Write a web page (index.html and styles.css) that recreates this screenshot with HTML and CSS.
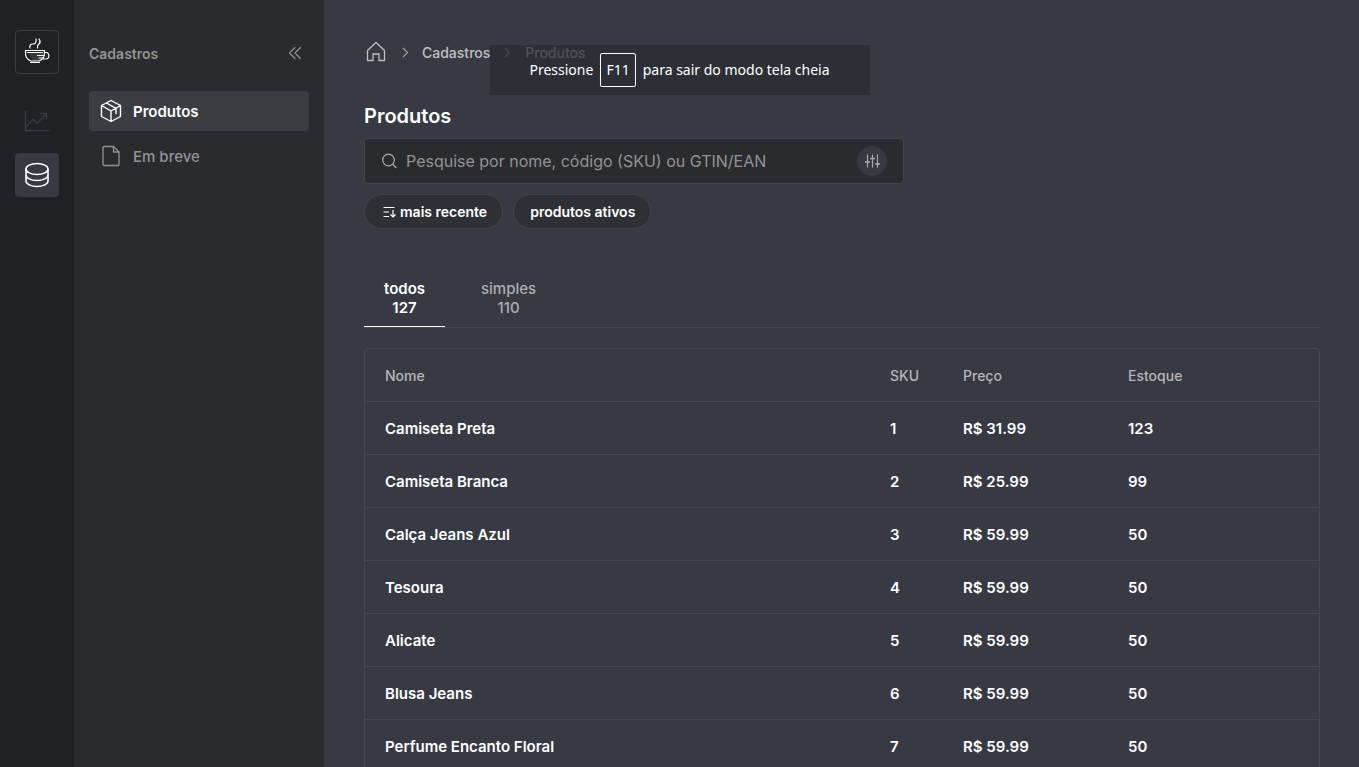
FILE: index.html
```html
<!DOCTYPE html>
<html lang="pt-BR">
<head>
<meta charset="utf-8">
<meta name="viewport" content="width=device-width, initial-scale=1">
<title>Produtos</title>
<link rel="stylesheet" href="styles.css">
</head>
<body>
<div class="app">
  <nav class="rail" aria-label="Principal">
    <a class="rail-item logo" href="#" aria-label="Início">
      <svg width="28" height="28" viewBox="0 0 28 28" fill="none" stroke="#fff" stroke-width="1.200" stroke-linecap="round" stroke-linejoin="round">
        <path d="M6.500 15c0 4 2 6.500 5 8.500h5l3-4V15z" fill="#373a42" stroke="none"/>
        <path d="M2.500 12.500h19M2.500 12.500V15c0 4 2.500 7 5.500 8h8c3-1 5.500-4 5.500-8v-2.500M4.500 14.500h15M7.500 24.500h9"/>
        <path d="M14.500 17.500h6M16 20h4M21.500 14.500H23c4 0 4 6.500-.5 6.500H20"/>
        <path d="M7 10c-.5-3 .5-4 3-4s3.500-1.500 3-5M14.500 10c-.5-3 .5-3 2-4.500s.5-3-.5-4.500"/>
      </svg>
    </a>
    <a class="rail-item chart" href="#" aria-label="Relatórios">
      <svg width="28" height="28" viewBox="0 0 28 28" fill="none" stroke="currentColor" stroke-width="1.500" stroke-linecap="round" stroke-linejoin="round">
        <path d="M2.500 4.500v19h23M3 20l7-7.500 4 4L23 7M18 6.500h5.500V12"/>
      </svg>
    </a>
    <a class="rail-item current" href="#" aria-label="Cadastros">
      <svg width="28" height="28" viewBox="0 0 28 28" fill="none" stroke="currentColor" stroke-width="1.600">
        <ellipse cx="14" cy="8" rx="11" ry="5.500"/>
        <path d="M3 8v12c0 3 5 5.500 11 5.500S25 23 25 20V8M3 14c0 3 5 5.500 11 5.500S25 17 25 14"/>
      </svg>
    </a>
  </nav>

  <aside class="sidebar">
    <div class="sidebar-head">
      <h2>Cadastros</h2>
      <button class="icon-button" type="button" aria-label="Recolher menu">
        <svg width="16" height="16" viewBox="0 0 16 16" fill="none" stroke="currentColor" stroke-width="1.200" stroke-linecap="round" stroke-linejoin="round"><path d="M8 2.500L2.500 8 8 13.500M13.500 2.500L8 8l5.500 5.500"/></svg>
      </button>
    </div>
    <ul class="menu">
      <li><a class="menu-item selected" href="#">
        <svg width="24" height="24" viewBox="0 0 24 24" fill="none" stroke="currentColor" stroke-width="1.400" stroke-linejoin="round" stroke-linecap="round"><path d="M12 1.500l9.500 5v11L12 22.500l-9.500-5v-11zM2.500 6.500L12 12l9.500-5.500M12 12v10.500M7.500 4l9.500 5.300v5.200"/></svg>
        Produtos</a></li>
      <li><a class="menu-item" href="#">
        <svg width="24" height="24" viewBox="0 0 24 24" fill="none" stroke="currentColor" stroke-width="1.300" stroke-linejoin="round"><path d="M5 2.500h9.500l5.500 5.500v12.500q0 1-1 1H5q-1 0-1-1v-17q0-1 1-1zM14.500 2.500V8H20"/></svg>
        Em breve</a></li>
    </ul>
  </aside>

  <main class="content">
    <nav class="breadcrumb" aria-label="Trilha">
      <a href="#" aria-label="Início"><svg width="24" height="24" viewBox="0 0 24 24" fill="none" stroke="currentColor" stroke-width="1.300" stroke-linejoin="round"><path d="M3.500 9.500L12 1.500l8.500 8v10h-5.500v-6.500H9v6.500H3.500z"/></svg></a>
      <svg class="chevron" width="12" height="12" viewBox="0 0 12 12" fill="none" stroke="currentColor" stroke-width="1.100"><path d="M4 1l4.500 4.500L4 10"/></svg>
      <a href="#">Cadastros</a>
      <svg class="chevron" width="12" height="12" viewBox="0 0 12 12" fill="none" stroke="currentColor" stroke-width="1.100"><path d="M4 1l4.500 4.500L4 10"/></svg>
      <span class="here">Produtos</span>
    </nav>

    <h1>Produtos</h1>

    <form class="search">
      <svg width="18" height="18" viewBox="0 0 18 18" fill="none" stroke="currentColor" stroke-width="1.200" stroke-linecap="round"><circle cx="7.500" cy="8" r="5.800"/><path d="M12 12.500l3 3"/></svg>
      <input type="search" aria-label="Pesquisar produtos" placeholder="Pesquise por nome, código (SKU) ou GTIN/EAN">
      <button class="filter" type="button" aria-label="Filtros">
        <svg width="16" height="16" viewBox="0 0 16 16" fill="none" stroke="currentColor" stroke-width="1.100"><path d="M3.500 1.500v13M8.500 1.500v13M13.500 1.500v13"/><path stroke-width="1.500" d="M1 9h5M6 5.500h5M11 11h5"/></svg>
      </button>
    </form>

    <div class="chips">
      <button class="chip" type="button">
        <svg width="16" height="16" viewBox="0 0 16 16" fill="none" stroke="currentColor" stroke-width="1.200"><path d="M2.500 3.500h11M2.500 8H8M2.500 12.500H8M12 6v7M9.500 10.500L12 13l2.500-2.500"/></svg>mais recente</button>
      <button class="chip" type="button">produtos ativos</button>
    </div>

    <div class="tabs" role="tablist">
      <button class="tab active" type="button" role="tab" aria-selected="true"><span>todos</span><span>127</span></button>
      <button class="tab" type="button" role="tab" aria-selected="false"><span>simples</span><span>110</span></button>
    </div>

    <div class="table-frame">
      <table>
        <colgroup><col class="col-name"><col class="col-sku"><col class="col-price"><col class="col-stock"></colgroup>
        <thead><tr><th>Nome</th><th>SKU</th><th>Preço</th><th>Estoque</th></tr></thead>
        <tbody>
          <tr><td>Camiseta Preta</td><td>1</td><td>R$ 31.99</td><td>123</td></tr>
          <tr><td>Camiseta Branca</td><td>2</td><td>R$ 25.99</td><td>99</td></tr>
          <tr><td>Calça Jeans Azul</td><td>3</td><td>R$ 59.99</td><td>50</td></tr>
          <tr><td>Tesoura</td><td>4</td><td>R$ 59.99</td><td>50</td></tr>
          <tr><td>Alicate</td><td>5</td><td>R$ 59.99</td><td>50</td></tr>
          <tr><td>Blusa Jeans</td><td>6</td><td>R$ 59.99</td><td>50</td></tr>
          <tr><td>Perfume Encanto Floral</td><td>7</td><td>R$ 59.99</td><td>50</td></tr>
        </tbody>
      </table>
    </div>
  </main>
</div>
<div class="fullscreen-hint" role="status">Pressione <kbd>F11</kbd> para sair do modo tela cheia</div>
</body>
</html>
```

FILE: styles.css
```css
* { box-sizing: border-box; }
body {
  margin: 0;
  background: #373a42;
  color: #fff;
  font-family: Inter, "Liberation Sans", sans-serif;
  font-size: 15px;
  line-height: 20px;
}
a { color: inherit; text-decoration: none; }
button { font: inherit; color: inherit; background: none; border: 0; padding: 0; }
svg { display: block; flex: none; }
.app { display: flex; height: 100vh; overflow: hidden; }

.rail {
  flex: none;
  display: flex;
  flex-direction: column;
  align-items: center;
  gap: 10px;
  width: 74px;
  padding-top: 30px;
  background: #202125;
}
.rail-item {
  display: flex;
  align-items: center;
  justify-content: center;
  width: 44px;
  height: 44px;
  border-radius: 4px;
}
.logo { border: 1px solid #3c3e42; margin-bottom: 15px; }
.chart { color: #373a42; }
.current { background: #373a42; }

.sidebar {
  flex: none;
  width: 250px;
  padding: 41px 15px 0;
  background: #2a2b2e;
  color: #929395;
}
.sidebar-head { display: flex; align-items: center; justify-content: space-between; height: 25px; }
.sidebar-head h2 { margin: 0; font-size: 14px; font-weight: 600; }
.icon-button { padding: 0 6px 2px; }
.menu { display: grid; gap: 5px; margin: 25px 0 0; padding: 0; list-style: none; }
.menu-item {
  display: flex;
  align-items: center;
  gap: 10px;
  height: 40px;
  padding: 0 10px;
  border-radius: 4px;
  line-height: 21px;
  font-weight: 500;
}
.selected { background: #3a3d41; color: #fff; font-weight: 600; }

.content { flex: 1; min-width: 0; padding: 40px 39px 0 40px; }
.breadcrumb { display: flex; align-items: center; gap: 11px; height: 25px; font-size: 14px; font-weight: 500; color: #bfc0c2; }
.chevron { color: #a0a1a4; }
.here { padding-left: 1px; }
h1 { margin: 39px 0 0; font-size: 20px; line-height: 24px; font-weight: 600; }
.search {
  display: flex;
  align-items: center;
  gap: 7px;
  max-width: 540px;
  height: 46px;
  margin-top: 10px;
  padding: 0 16px;
  border: 1px solid #414449;
  border-radius: 4px;
  background: #2a2b2e;
  color: #acadb0;
}
.search input {
  flex: 1;
  min-width: 0;
  padding: 0;
  border: 0;
  outline: 0;
  background: none;
  color: #fff;
  font: inherit;
  font-size: 16px;
}
.search input::placeholder { color: #929395; opacity: 1; }
.filter {
  display: grid;
  place-items: center;
  width: 30px;
  height: 30px;
  border-radius: 50%;
  background: #373a42;
}
.chips { display: flex; gap: 10px; margin-top: 10px; }
.chip {
  display: flex;
  align-items: center;
  gap: 3px;
  height: 35px;
  padding: 0 15px 0 16px;
  border: 1px solid #414449;
  border-radius: 18px;
  background: #2f3035;
  font-size: 14px;
  font-weight: 600;
}
.tabs { display: flex; gap: 16px; margin-top: 40px; border-bottom: 1px solid #45484f; }
.tab {
  display: flex;
  flex-direction: column;
  align-items: center;
  padding: 10px 20px 9px;
  border-bottom: 1px solid transparent;
  color: #acadb0;
  line-height: 19px;
  font-weight: 500;
}
.active { border-color: #fff; color: #fff; font-weight: 600; }

.table-frame { margin-top: 20px; border: 1px solid #45484f; border-radius: 4px; }
table { width: 100%; table-layout: fixed; border-collapse: separate; border-spacing: 0; }
.col-sku { width: 73px; }
.col-price { width: 165px; }
.col-stock { width: 211px; }
th, td { height: 53px; padding: 2px 20px 0; border-bottom: 1px solid #45484f; text-align: left; }
th { color: #b4b5b8; font-size: 14px; font-weight: 500; }
td { font-weight: 600; }

.fullscreen-hint {
  position: absolute;
  top: 45px;
  left: 50%;
  transform: translateX(-50%);
  display: flex;
  align-items: center;
  gap: 7px;
  height: 50px;
  padding: 0 40px;
  background: rgba(41, 44, 50, .75);
  font-family: "Noto Sans", sans-serif;
  font-size: 14px;
  white-space: nowrap;
}
kbd { padding: 6px 5px; border: 1px solid #fff; border-radius: 2px; font: inherit; }
```
